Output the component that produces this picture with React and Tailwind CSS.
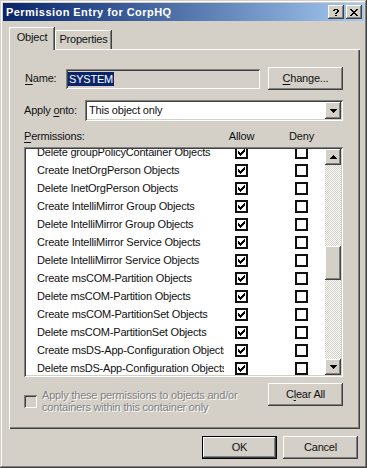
const rows = [
  "Delete groupPolicyContainer Objects",
  "Create InetOrgPerson Objects",
  "Delete InetOrgPerson Objects",
  "Create IntelliMirror Group Objects",
  "Delete IntelliMirror Group Objects",
  "Create IntelliMirror Service Objects",
  "Delete IntelliMirror Service Objects",
  "Create msCOM-Partition Objects",
  "Delete msCOM-Partition Objects",
  "Create msCOM-PartitionSet Objects",
  "Delete msCOM-PartitionSet Objects",
  "Create msDS-App-Configuration Objects",
  "Delete msDS-App-Configuration Objects",
];

const raised =
  "shadow-[inset_-1px_-1px_#404040,inset_1px_1px_#fff,inset_-2px_-2px_#808080,inset_2px_2px_#d4d0c8]";
const sunken =
  "shadow-[inset_1px_1px_#808080,inset_-1px_-1px_#fff,inset_2px_2px_#404040,inset_-2px_-2px_#d4d0c8]";

function Check() {
  return (
    <svg width="7" height="7" viewBox="0 0 7 7" shapeRendering="crispEdges">
      <path
        fill="#000"
        d="M6 0h1v1h-1z M5 1h2v1h-2z M0 2h1v1h-1z M4 2h3v1h-3z M0 3h2v1h-2z M3 3h3v1h-3z M0 4h5v1h-5z M1 5h3v1h-3z M2 6h1v1h-1z"
      />
    </svg>
  );
}

function Box({ checked }) {
  return (
    <div className="w-[13px] h-[13px] border-2 border-[#111] bg-white flex items-center justify-center shrink-0">
      {checked && <Check />}
    </div>
  );
}

function Arrow({ up }) {
  return (
    <svg width="7" height="4" viewBox="0 0 7 4" shapeRendering="crispEdges">
      <path
        fill="#000"
        d={up ? "M3 0h1v1h-1z M2 1h3v1h-3z M1 2h5v1h-5z M0 3h7v1h-7z" : "M0 0h7v1h-7z M1 1h5v1h-5z M2 2h3v1h-3z M3 3h1v1h-1z"}
      />
    </svg>
  );
}

function Button({ children, className = "" }) {
  return (
    <div className={`w-[75px] h-[23px] flex items-center justify-center bg-[#d4d0c8] ${raised} ${className}`}>
      {children}
    </div>
  );
}

export default function App() {
  return (
    <div className="w-[367px] h-[468px] bg-[#d4d0c8] text-[11px] tracking-[-0.2px] text-[#111] font-['Liberation_Sans',Arial,sans-serif] shadow-[inset_-1px_-1px_#404040,inset_1px_1px_#d4d0c8,inset_-2px_-2px_#808080,inset_2px_2px_#fff] pt-[3px] flex flex-col select-none">
      {/* Title bar */}
      <div className="mx-[3px] h-[18px] bg-gradient-to-r from-[#0a246a] to-[#a6caf0] flex items-center pl-[3px] pr-[2px]">
        <span className="text-white font-bold text-[11px] tracking-[0.45px]">Permission Entry for CorpHQ</span>
        <div className={`ml-auto w-[16px] h-[14px] bg-[#d4d0c8] flex items-center justify-center ${raised}`}>
          <svg width="6" height="7" viewBox="0 0 6 7" shapeRendering="crispEdges">
            <path fill="#000" d="M1 0h4v1h-4z M0 1h2v1h-2z M4 1h2v1h-2z M4 2h2v1h-2z M3 3h2v1h-2z M2 4h2v1h-2z M2 6h2v1h-2z" />
          </svg>
        </div>
        <div className={`ml-[2px] w-[16px] h-[14px] bg-[#d4d0c8] flex items-center justify-center ${raised}`}>
          <svg width="8" height="7" viewBox="0 0 8 7" shapeRendering="crispEdges">
            <path fill="#000" d="M0 0h2v1h-2z M6 0h2v1h-2z M1 1h2v1h-2z M5 1h2v1h-2z M2 2h4v1h-4z M3 3h2v1h-2z M2 4h4v1h-4z M1 5h2v1h-2z M5 5h2v1h-2z M0 6h2v1h-2z M6 6h2v1h-2z" />
          </svg>
        </div>
      </div>

      {/* Tabs */}
      <div className="ml-[9px] mt-[6px] h-[22px] flex items-end">
        <div className="relative z-10 -mb-px w-[46px] h-[23px] bg-[#d4d0c8] shadow-[inset_-1px_0_#404040,inset_1px_1px_#fff,inset_-2px_0_#808080] flex items-center justify-center pb-[3px]">
          Object
        </div>
        <div className="w-[57px] h-[19px] bg-[#d4d0c8] shadow-[inset_-1px_0_#404040,inset_1px_1px_#fff,inset_-2px_0_#808080] flex items-center justify-center pb-px">
          Properties
        </div>
      </div>

      {/* Tab panel */}
      <div className="ml-[9px] w-[351px] h-[380px] shadow-[inset_1px_1px_#fff,inset_-1px_-1px_#404040,inset_-2px_-2px_#808080] pl-[15px] flex flex-col">
        {/* Name */}
        <div className="mt-[18px] h-[23px] flex items-center">
          <div className="w-[42px] pl-px">
            <span className="underline underline-offset-2">N</span>ame:
          </div>
          <div className={`w-[194px] h-[20px] bg-[#d4d0c8] ${sunken} pl-[2px] flex items-center`}>
            <span className="bg-[#0a246a] text-white px-px leading-[14px]">SYSTEM</span>
          </div>
          <Button className="ml-[8px]">
            <span>
              <span className="underline underline-offset-2">C</span>hange...
            </span>
          </Button>
        </div>

        {/* Apply onto */}
        <div className="mt-[10px] h-[21px] flex items-center">
          <div className="w-[61px]">
            Apply <span className="underline underline-offset-2">o</span>nto:
          </div>
          <div className={`w-[258px] h-[21px] bg-white ${sunken} p-[2px] flex items-center`}>
            <span className="pl-[2px]">This object only</span>
            <div className={`ml-auto w-[16px] h-[17px] bg-[#d4d0c8] ${raised} flex items-center justify-center`}>
              <Arrow />
            </div>
          </div>
        </div>

        {/* Header */}
        <div className="mt-[9px] h-[13px] leading-[13px] flex w-[319px]">
          <div className="w-[197px]">
            <span className="underline underline-offset-2">P</span>ermissions:
          </div>
          <div className="w-[41px] text-center">Allow</div>
          <div className="ml-[19px] w-[41px] text-center">Deny</div>
        </div>

        {/* List */}
        <div className={`mt-[4px] w-[319px] h-[230px] bg-white ${sunken} p-[2px] flex`}>
          <div className="flex-1 overflow-hidden">
            <div className="-mt-[6px]">
              {rows.map((r) => (
                <div key={r} className="h-[18px] flex items-center">
                  <div className="w-[198px] pl-[11px] overflow-hidden whitespace-nowrap">{r}</div>
                  <div className="ml-[11px]">
                    <Box checked />
                  </div>
                  <div className="ml-[47px]">
                    <Box />
                  </div>
                </div>
              ))}
            </div>
          </div>
          <div className="w-[16px] flex flex-col bg-[repeating-conic-gradient(#fff_0_25%,#d4d0c8_0_50%)] bg-[length:2px_2px]">
            <div className={`h-[16px] bg-[#d4d0c8] ${raised} flex items-center justify-center`}>
              <Arrow up />
            </div>
            <div className="flex-1 flex flex-col">
              <div className={`mt-[81px] h-[34px] bg-[#d4d0c8] ${raised}`} />
            </div>
            <div className={`h-[16px] bg-[#d4d0c8] ${raised} flex items-center justify-center`}>
              <Arrow />
            </div>
          </div>
        </div>

        {/* Bottom */}
        <div className="mt-[6px] w-[319px] flex items-start">
          <div className="mt-[6px] flex items-center">
            <div className={`w-[13px] h-[13px] bg-[#d4d0c8] ${sunken}`} />
            <div className="ml-[5px] leading-[12px] text-[#808080] [text-shadow:1px_1px_0_#fff]">
              <div>
                Apply <span className="underline underline-offset-2">t</span>hese permissions to objects and/or
              </div>
              <div>containers within this container only</div>
            </div>
          </div>
          <Button className="ml-auto">
            <span>
              C<span className="underline underline-offset-2">l</span>ear All
            </span>
          </Button>
        </div>
      </div>

      {/* Dialog buttons */}
      <div className="mt-[7px] flex justify-end gap-[6px] pr-[9px]">
        <div className="w-[75px] h-[23px] border border-black">
          <div className={`w-full h-full flex items-center justify-center bg-[#d4d0c8] ${raised}`}>OK</div>
        </div>
        <Button>Cancel</Button>
      </div>
    </div>
  );
}
